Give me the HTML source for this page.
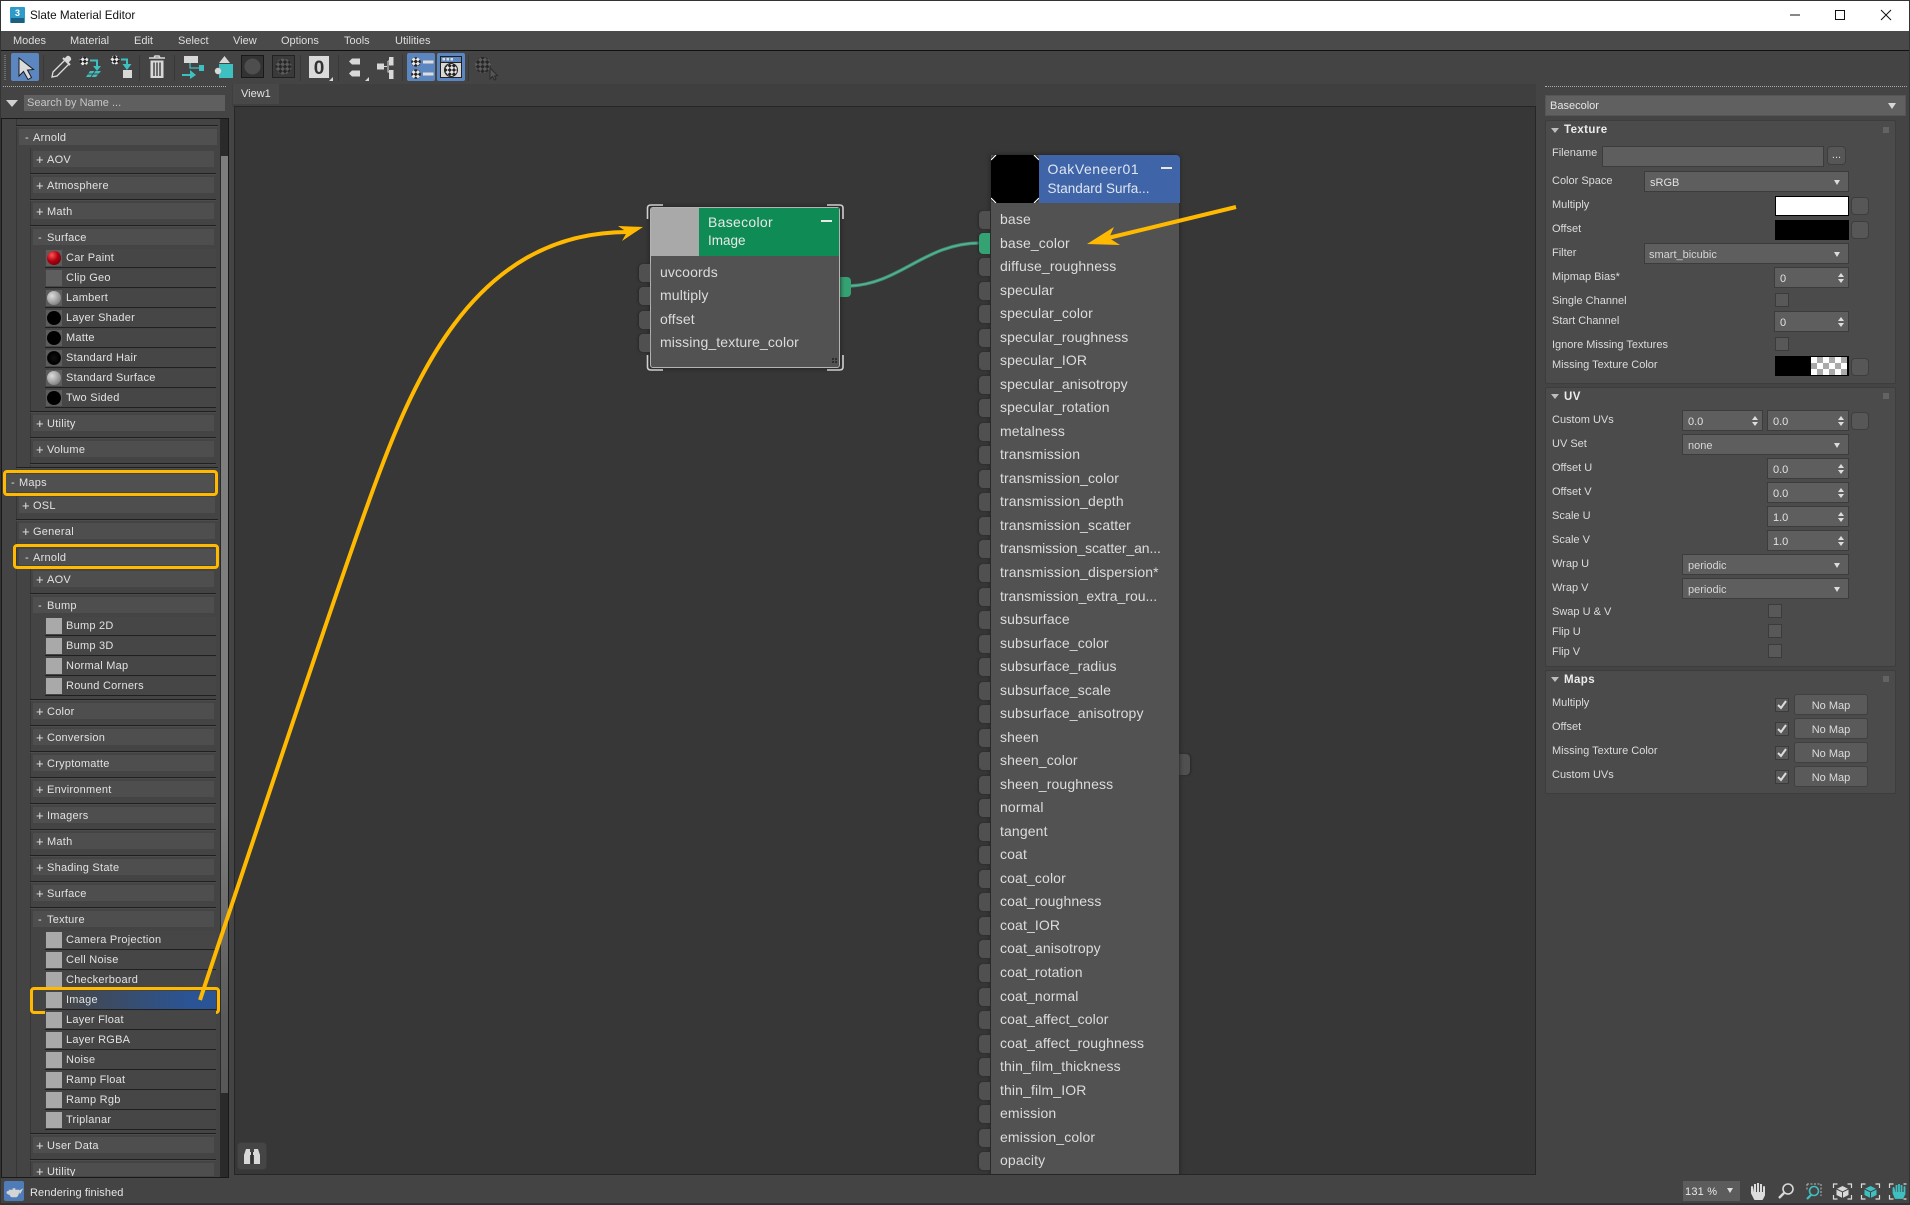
<!DOCTYPE html>
<html><head><meta charset="utf-8"><title>Slate Material Editor</title>
<style>
html,body{margin:0;padding:0;background:#444;}
body{width:1910px;height:1205px;position:relative;overflow:hidden;font:11px "Liberation Sans",sans-serif;color:#dcdcdc;}
div,span{box-sizing:border-box;}
.a{position:absolute;}
.t{position:absolute;white-space:nowrap;height:16px;line-height:18px;}
.m{position:absolute;top:33px;height:16px;line-height:16px;color:#dedede;font-size:11px;}
/* left list */
.cat{position:absolute;left:33px;width:181px;height:16px;background:#4e4e4e;line-height:18px;padding-left:14px;letter-spacing:.25px;color:#e2e2e2;white-space:nowrap;}
.cat b{position:absolute;left:3px;top:0;font-weight:normal;font-size:13px;}
.cat2{left:19px;width:196px;}
.sep{position:absolute;left:30px;width:186px;height:1px;background:#202020;box-shadow:0 1px 0 #4c4c4c;}
.sep2{left:16px;width:202px;}
.it{position:absolute;left:45px;width:171px;height:19px;line-height:19px;background:#464646;border-bottom:1px solid #202020;padding-left:21px;letter-spacing:.25px;color:#e2e2e2;white-space:nowrap;}
.it i{position:absolute;left:1px;top:1px;width:16px;height:16px;background:#a9a9a9;}
.it i.s{background:#5c5c5c;}
.it i.s:after{content:"";position:absolute;left:1px;top:1px;width:14px;height:14px;border-radius:50%;background:#000;}
.it i.g:after{background:radial-gradient(circle at 35% 35%,#ddd,#888 70%,#555);}
.it i.r:after{background:radial-gradient(circle at 35% 30%,#f55,#b00010 45%,#500);}
.it i.h:after{background:radial-gradient(circle at 50% 50%,#111,#000 60%,#333);}
.box{position:absolute;border:3px solid #ffb900;border-radius:4px;}
/* nodes */
.node{position:absolute;background:#525252;box-shadow:0 0 5px #1e1e1e;}
.rows{position:absolute;font-size:14px;letter-spacing:.13px;color:#dcdcdc;white-space:nowrap;}
.rows div{position:relative;height:23.54px;line-height:23.54px;}
.rows div:before{content:"";position:absolute;left:-21px;top:3px;width:11px;height:18px;background:#505050;border-radius:4px 0 0 4px;box-shadow:-1px 0 2px #272727;}
.rows div.on:before{background:#35a273;top:1px;height:21px;}
/* properties */
.ro{position:absolute;left:1545px;width:351px;background:#4b4b4b;border:1px solid #3d3d3d;border-radius:2px;}
.rt{position:absolute;left:1564px;font-weight:bold;font-size:11.5px;letter-spacing:.4px;color:#ececec;white-space:nowrap;height:16px;line-height:16px;}
.tri{position:absolute;width:0;height:0;border-left:4px solid transparent;border-right:4px solid transparent;border-top:5px solid #bdbdbd;}
.gr{position:absolute;left:1883px;width:6px;height:6px;background:radial-gradient(#aaa 40%,transparent 45%) 0 0/2px 2px;}
.in{position:absolute;background:#5e5e5e;border:1px solid #3c3c3c;height:21px;line-height:22px;padding-left:5px;color:#e2e2e2;white-space:nowrap;}
.dd:after{content:"";position:absolute;right:8px;top:8px;border-left:3.5px solid transparent;border-right:3.5px solid transparent;border-top:5px solid #ddd;}
.sp:before{content:"";position:absolute;right:4px;top:5px;border-left:3px solid transparent;border-right:3px solid transparent;border-bottom:4px solid #ddd;}
.sp:after{content:"";position:absolute;right:4px;top:11px;border-left:3px solid transparent;border-right:3px solid transparent;border-top:4px solid #ddd;}
.sb{position:absolute;left:1851px;width:18px;height:18px;background:#575757;border:1px solid #3e3e3e;border-radius:4px;}
.ck{position:absolute;width:14px;height:14px;background:#585858;border:1px solid #3b3b3b;}
.nm{position:absolute;left:1794px;width:74px;height:21px;line-height:22px;background:#5a5a5a;border:1px solid #404040;border-radius:3px;text-align:center;color:#dcdcdc;}
</style></head>
<body>
<!-- frame / title -->
<div class="a" style="left:0;top:0;width:1910px;height:1px;background:#333"></div>
<div class="a" style="left:1px;top:1px;width:1908px;height:30px;background:#fff"></div>
<div class="a" style="left:0;top:0;width:1px;height:1205px;background:#333"></div>
<div class="a" style="left:1909px;top:0;width:1px;height:1205px;background:#333"></div>
<svg class="a" style="left:9px;top:6px" width="17" height="18" viewBox="0 0 17 18"><rect x="1" y="1" width="15" height="16" rx="1" fill="#2f9bc9"/><rect x="2" y="12" width="13" height="5" fill="#1c5f80"/><text x="8.5" y="10" font-family="Liberation Sans" font-size="9" font-weight="bold" fill="#fff" text-anchor="middle">3</text></svg>
<div class="t" style="left:30px;top:7px;font-size:11.7px;color:#111;">Slate Material Editor</div>
<svg class="a" style="left:1785px;top:5px" width="110" height="20"><path d="M5 10H15" stroke="#111" fill="none"/><rect x="50.5" y="5.5" width="9" height="9" stroke="#111" fill="none"/><path d="M96 5L106 15M106 5L96 15" stroke="#111" fill="none"/></svg>

<!-- menu -->
<div class="a" style="left:1px;top:31px;width:1908px;height:19px;background:#4a4a4a"></div>
<div class="a" style="left:1px;top:50px;width:1908px;height:1px;background:#111"></div>
<div class="m" style="left:13px">Modes</div><div class="m" style="left:70px">Material</div><div class="m" style="left:134px">Edit</div><div class="m" style="left:178px">Select</div><div class="m" style="left:233px">View</div><div class="m" style="left:281px">Options</div><div class="m" style="left:344px">Tools</div><div class="m" style="left:395px">Utilities</div>

<!-- toolbar -->
<svg class="a" style="left:0;top:50px" width="520" height="36" viewBox="0 50 520 36">
<defs>
<pattern id="ckw" width="6" height="6" patternUnits="userSpaceOnUse" patternTransform="rotate(45)"><rect width="6" height="6" fill="#e8e8e8"/><rect width="3" height="3" fill="#222"/><rect x="3" y="3" width="3" height="3" fill="#222"/></pattern>
<pattern id="ckd" width="6.5" height="6.5" patternUnits="userSpaceOnUse" patternTransform="rotate(45)"><rect width="6.5" height="6.5" fill="#5c5c5c"/><rect width="3.25" height="3.25" fill="#262626"/><rect x="3.25" y="3.25" width="3.25" height="3.25" fill="#262626"/></pattern>
</defs>
<path d="M5 55V81" stroke="#999" stroke-width="1" stroke-dasharray="1 1"/>
<g stroke="#383838"><path d="M43.5 55V81M139.5 55V81M174.5 55V81M300.5 55V81M338.5 55V81M402.5 55V81M468.5 55V81"/></g>
<rect x="11" y="53" width="28" height="28" rx="2" fill="#5b86c0"/>
<path d="M19 58V76L23.5 71.5 28 79.5 31.5 77.5 27.5 70 33.5 69.5Z" fill="#dcdcdc" stroke="#1d1d1d"/>
<path d="M52 77L53 72 65 60 69 64 57 76Z" fill="#444" stroke="#ddd" stroke-width="1.3"/><path d="M64 59L67 56C69 55 72 58 71 60L68 63Z" fill="#d8d8d8"/><path d="M63 58L70 65" stroke="#d8d8d8" stroke-width="2"/>
<circle cx="84" cy="61" r="4.5" fill="url(#ckw)"/>
<path d="M90 60.5H97V68" fill="none" stroke="#3fc0c0" stroke-width="2"/><path d="M93 66H101L97 71Z" fill="#3fc0c0"/><path d="M90 71H101L96 77H86Z" fill="#3fc0c0"/><path d="M95 71L91 77M87.5 74H99" stroke="#444"/>
<circle cx="115" cy="60" r="4.5" fill="url(#ckw)"/>
<path d="M121 59.5H127V66" fill="none" stroke="#3fc0c0" stroke-width="2"/><path d="M122.5 64H131.5L127 70Z" fill="#3fc0c0"/><rect x="123" y="70" width="9" height="8" fill="#d8d8d8"/>
<path d="M149 58H165M154 58L155 56H159L160 58" stroke="#d8d8d8" stroke-width="1.6" fill="none"/><path d="M150.5 60.5H163.5V78H150.5Z" fill="#d8d8d8"/><path d="M154 62.5V76M157 62.5V76M160 62.5V76" stroke="#444" stroke-width="1.5"/>
<rect x="184" y="56" width="14" height="7" fill="#d8d8d8"/><path d="M190 63V68H199" stroke="#3fc0c0" fill="none" stroke-width="1.3"/><rect x="199" y="65" width="5" height="6" fill="#3fc0c0"/><path d="M182 75H192" stroke="#3fc0c0" stroke-width="2"/><path d="M190 70L196 75 190 79Z" fill="#3fc0c0"/>
<path d="M219 63L224.5 56 230 63Z" fill="#d8d8d8"/><rect x="219" y="64" width="14" height="14" fill="#3fc0c0"/><circle cx="218" cy="71" r="3.2" fill="#d8d8d8"/>
<rect x="241.5" y="55.5" width="22" height="22" fill="#333" stroke="#191919"/><circle cx="252.5" cy="66.5" r="8" fill="#4e4e4e"/>
<rect x="272.5" y="55.5" width="22" height="22" fill="#3a3a3a" stroke="#222"/><circle cx="283.5" cy="66.5" r="8" fill="url(#ckd)"/>
<rect x="309" y="56" width="20" height="22" fill="#dadada"/><text x="319" y="74" font-family="Liberation Sans" font-size="19" font-weight="bold" fill="#333" text-anchor="middle">0</text>
<path d="M329 81L333 77V81Z" fill="#d8d8d8"/>
<path d="M352 58.5H360V64.5H352L349 61.5Z" fill="#d8d8d8"/><path d="M352 70.5H360V76.5H352L349 73.5Z" fill="#d8d8d8"/><path d="M365 81H369V77Z" fill="#d8d8d8"/>
<rect x="377" y="63.5" width="7" height="6" fill="#d8d8d8"/><path d="M384 66.5H387M388 61V72H389M388 61H389" stroke="#d8d8d8" fill="none"/><rect x="389" y="57" width="4.5" height="8.5" fill="#d8d8d8"/><rect x="389" y="70" width="4.5" height="9" fill="#d8d8d8"/>
<rect x="407" y="53" width="28" height="28" rx="2" fill="#5b86c0"/><circle cx="416" cy="62" r="4.8" fill="url(#ckw)"/><circle cx="416" cy="74" r="4.8" fill="url(#ckw)"/><rect x="423" y="60.5" width="10.5" height="3" fill="#ddd"/><rect x="423" y="72.5" width="10.5" height="3" fill="#ddd"/>
<rect x="437" y="53" width="28" height="28" rx="2" fill="#5b86c0"/><rect x="440.5" y="56.5" width="21" height="21" fill="#d8d8d8" stroke="#222"/><rect x="440.5" y="56.5" width="21" height="6" fill="#5b86c0" stroke="#222"/><rect x="442.5" y="58" width="2.5" height="2.5" fill="#ddd"/><rect x="446.5" y="58" width="2.5" height="2.5" fill="#ddd"/><rect x="450.5" y="58" width="2.5" height="2.5" fill="#ddd"/><circle cx="451" cy="70" r="6.5" fill="url(#ckw)" stroke="#222"/>
<circle cx="483" cy="65" r="8" fill="url(#ckd)"/><path d="M490 68V79L492.5 76.5 494.5 80 496 79 494.5 76 497.5 75.5Z" fill="#555" stroke="#2a2a2a"/>
</svg>
<div class="a" style="left:3px;top:86px;width:223px;height:1px;border-top:1px dotted #aaa"></div>
<div class="a" style="left:1545px;top:86px;width:362px;height:1px;border-top:1px dotted #aaa"></div>

<!-- search -->
<div class="a" style="left:6px;top:100px;border-left:6px solid transparent;border-right:6px solid transparent;border-top:7px solid #d0d0d0"></div>
<div class="a" style="left:24px;top:95px;width:201px;height:16px;background:#5f5f5f;padding-left:3px;line-height:17px;color:#c6c6c6;">Search by Name ...</div>

<!-- left panel -->
<div class="a" style="left:1px;top:118px;width:228px;height:1060px;background:#444;border:1px solid #191919;overflow:hidden"></div>
<div class="a" style="left:16px;top:119px;width:1px;height:1058px;background:#363636"></div>
<div class="a" style="left:30px;top:148px;width:1px;height:319px;background:#363636"></div>
<div class="a" style="left:30px;top:568px;width:1px;height:608px;background:#363636"></div>
<div class="a" style="left:220px;top:119px;width:8px;height:1058px;background:#2a2a2a"></div>
<div class="a" style="left:221px;top:156px;width:7px;height:937px;background:linear-gradient(#7e7e7e,#7e7e7e 70%,#5a5a5a 92%,#585858)"></div>
<div class="sep sep2" style="top:125px"></div>

<div class="a" style="left:19px;top:129px;width:198px;height:16px;background:#505050;line-height:18px;padding-left:14px;letter-spacing:.25px;color:#e2e2e2"><b style="position:absolute;left:6px;top:0;font-weight:normal">-</b>Arnold</div>
<div class="cat" style="top:151px"><b>+</b>AOV</div><div class="sep" style="top:173px"></div>
<div class="cat" style="top:177px"><b>+</b>Atmosphere</div><div class="sep" style="top:199px"></div>
<div class="cat" style="top:203px"><b>+</b>Math</div><div class="sep" style="top:225px"></div>
<div class="cat" style="top:229px"><b style="left:5px;font-size:11px">-</b>Surface</div>
<div class="it" style="top:249px"><i class="s r"></i>Car Paint</div>
<div class="it" style="top:269px"><i style="background:#5e5e5e"></i>Clip Geo</div>
<div class="it" style="top:289px"><i class="s g"></i>Lambert</div>
<div class="it" style="top:309px"><i class="s"></i>Layer Shader</div>
<div class="it" style="top:329px"><i class="s"></i>Matte</div>
<div class="it" style="top:349px"><i class="s h"></i>Standard Hair</div>
<div class="it" style="top:369px"><i class="s g"></i>Standard Surface</div>
<div class="it" style="top:389px"><i class="s"></i>Two Sided</div>
<div class="sep" style="top:411px"></div>
<div class="cat" style="top:415px"><b>+</b>Utility</div><div class="sep" style="top:437px"></div>
<div class="cat" style="top:441px"><b>+</b>Volume</div><div class="sep" style="top:463px"></div>
<div class="sep sep2" style="top:467px"></div>

<div class="a" style="left:6px;top:474px;width:208px;height:18px;background:#505050;line-height:19px;padding-left:13px;letter-spacing:.25px;color:#e2e2e2"><b style="position:absolute;left:5px;top:0;font-weight:normal">-</b>Maps</div>
<div class="box" style="left:3px;top:470px;width:215px;height:26px"></div>
<div class="cat cat2" style="top:497px"><b>+</b>OSL</div><div class="sep sep2" style="top:519px"></div>
<div class="cat cat2" style="top:523px"><b>+</b>General</div>
<div class="a" style="left:19px;top:549px;width:197px;height:16px;background:#505050;line-height:18px;padding-left:14px;letter-spacing:.25px;color:#e2e2e2"><b style="position:absolute;left:6px;top:0;font-weight:normal">-</b>Arnold</div>
<div class="box" style="left:13px;top:544px;width:206px;height:25px"></div>
<div class="cat" style="top:571px"><b>+</b>AOV</div><div class="sep" style="top:593px"></div>
<div class="cat" style="top:597px"><b style="left:5px;font-size:11px">-</b>Bump</div>
<div class="it" style="top:617px"><i></i>Bump 2D</div>
<div class="it" style="top:637px"><i></i>Bump 3D</div>
<div class="it" style="top:657px"><i></i>Normal Map</div>
<div class="it" style="top:677px"><i></i>Round Corners</div>
<div class="sep" style="top:699px"></div>
<div class="cat" style="top:703px"><b>+</b>Color</div><div class="sep" style="top:725px"></div>
<div class="cat" style="top:729px"><b>+</b>Conversion</div><div class="sep" style="top:751px"></div>
<div class="cat" style="top:755px"><b>+</b>Cryptomatte</div><div class="sep" style="top:777px"></div>
<div class="cat" style="top:781px"><b>+</b>Environment</div><div class="sep" style="top:803px"></div>
<div class="cat" style="top:807px"><b>+</b>Imagers</div><div class="sep" style="top:829px"></div>
<div class="cat" style="top:833px"><b>+</b>Math</div><div class="sep" style="top:855px"></div>
<div class="cat" style="top:859px"><b>+</b>Shading State</div><div class="sep" style="top:881px"></div>
<div class="cat" style="top:885px"><b>+</b>Surface</div><div class="sep" style="top:907px"></div>
<div class="cat" style="top:911px"><b style="left:5px;font-size:11px">-</b>Texture</div>
<div class="it" style="top:931px"><i></i>Camera Projection</div>
<div class="it" style="top:951px"><i></i>Cell Noise</div>
<div class="it" style="top:971px"><i></i>Checkerboard</div>
<div class="it" style="top:991px;background:linear-gradient(90deg,#464646 10%,#2a5495 85%)"><i></i>Image</div>
<div class="box" style="left:30px;top:987px;width:190px;height:27px"></div>
<div class="it" style="top:1011px"><i></i>Layer Float</div>
<div class="it" style="top:1031px"><i></i>Layer RGBA</div>
<div class="it" style="top:1051px"><i></i>Noise</div>
<div class="it" style="top:1071px"><i></i>Ramp Float</div>
<div class="it" style="top:1091px"><i></i>Ramp Rgb</div>
<div class="it" style="top:1111px"><i></i>Triplanar</div>
<div class="sep" style="top:1133px"></div>
<div class="cat" style="top:1137px"><b>+</b>User Data</div><div class="sep" style="top:1159px"></div>
<div class="cat" style="top:1163px;height:13px;overflow:hidden"><b>+</b>Utility</div>

<!-- tabs & canvas -->
<div class="a" style="left:232px;top:84px;width:1304px;height:23px;background:#3f3f3f"></div>
<div class="a" style="left:233px;top:84px;width:46px;height:20px;background:#484848;padding-left:8px;line-height:21px;color:#e2e2e2">View1</div>
<div class="a" style="left:234px;top:106px;width:1302px;height:1069px;background:#373737;border:1px solid #262626;overflow:hidden">
 <div class="a" style="left:-235px;top:-107px;width:1910px;height:1205px">
  <!-- wire -->
  <svg class="a" style="left:0;top:0" width="1910" height="1205"><path d="M850 286C900 284 925 243 980 243" fill="none" stroke="#3d8e74" stroke-width="3.4"/><path d="M850 286C900 284 925 243 980 243" fill="none" stroke="#58b395" stroke-width="1.4"/></svg>
  <!-- basecolor -->
  <div class="a" style="left:839px;top:277px;width:12px;height:20px;background:#35a273;border-radius:0 4px 4px 0"></div>
  <div class="node" style="left:650px;top:207px;width:190px;height:161px;border:1px solid #b4b4b4;border-radius:3px">
   <div class="a" style="left:0;top:0;width:188px;height:48px;background:#0f8c55"></div>
   <div class="a" style="left:0;top:0;width:48px;height:48px;background:#a9a9a9"></div>
   <div class="t" style="left:57px;top:5px;font-size:14px;height:18px;line-height:18px;color:#e8e8e8;letter-spacing:.3px">Basecolor</div>
   <div class="t" style="left:57px;top:24px;font-size:13.5px;height:18px;line-height:18px;color:#e8e8e8">Image</div>
   <div class="a" style="left:170px;top:12px;width:11px;height:2px;background:#e8e8e8"></div>
  </div>
  <div class="rows" style="left:660px;top:260.5px;"><div>uvcoords</div><div>multiply</div><div>offset</div><div>missing_texture_color</div></div>
  <svg class="a" style="left:0;top:0" width="1910" height="1205"><path d="M647.5 219V208Q647.5 205 651 205H663M843 219V208Q843 205 839.5 205H827M647.5 355V367Q647.5 370 651 370H663M843 355V367Q843 370 839.5 370H827" fill="none" stroke="#cfcfcf" stroke-width="1.6"/><g fill="#2e2e2e"><rect x="832" y="358" width="2" height="2"/><rect x="835" y="358" width="2" height="2"/><rect x="835" y="361" width="2" height="2"/><rect x="832" y="361" width="2" height="2"/></g></svg>
  <!-- oakveneer -->
  <div class="a" style="left:1179px;top:754px;width:11px;height:21px;background:#505050;border-radius:0 4px 4px 0;box-shadow:1px 0 2px #272727"></div>
  <div class="node" style="left:990.5px;top:155px;width:188.5px;height:1040px;border-radius:0 4px 0 0">
   <div class="a" style="left:0;top:0;width:189px;height:48px;background:#3f65a8;border-radius:0 4px 0 0"></div>
   <div class="a" style="left:0;top:0;width:48px;height:48px;background:#555"></div>
   <div class="a" style="left:0;top:0;width:48px;height:48px;background:#000;border-radius:5px"></div>
   <svg class="a" style="left:0;top:0" width="48" height="48"><path d="M0 5L5 0M43 0L48 5M48 43L43 48M5 48L0 43" stroke="#fff" stroke-width="1.2"/></svg>
   <div class="t" style="left:57px;top:5px;font-size:14px;height:18px;line-height:18px;color:#dfe6f2;letter-spacing:.55px">OakVeneer01</div>
   <div class="t" style="left:57px;top:25px;font-size:13.5px;height:18px;line-height:18px;color:#dfe6f2;letter-spacing:0">Standard Surfa...</div>
   <div class="a" style="left:170px;top:12px;width:11px;height:2px;background:#e8e8e8"></div>
  </div>
  <div class="rows" style="left:1000px;top:208px">
<div>base</div><div class="on">base_color</div><div>diffuse_roughness</div><div>specular</div><div>specular_color</div><div>specular_roughness</div><div>specular_IOR</div><div>specular_anisotropy</div><div>specular_rotation</div><div>metalness</div><div>transmission</div><div>transmission_color</div><div>transmission_depth</div><div>transmission_scatter</div><div style="letter-spacing:-.1px">transmission_scatter_an...</div><div>transmission_dispersion*</div><div style="letter-spacing:0">transmission_extra_rou...</div><div>subsurface</div><div>subsurface_color</div><div>subsurface_radius</div><div>subsurface_scale</div><div>subsurface_anisotropy</div><div>sheen</div><div>sheen_color</div><div>sheen_roughness</div><div>normal</div><div>tangent</div><div>coat</div><div>coat_color</div><div>coat_roughness</div><div>coat_IOR</div><div>coat_anisotropy</div><div>coat_rotation</div><div>coat_normal</div><div>coat_affect_color</div><div>coat_affect_roughness</div><div>thin_film_thickness</div><div>thin_film_IOR</div><div>emission</div><div>emission_color</div><div>opacity</div>
  </div>
  <!-- binoculars -->
  <div class="a" style="left:237px;top:1142px;width:30px;height:28px;background:#454545;border:1px solid #3d3d3d;border-radius:4px"></div>
  <svg class="a" style="left:237px;top:1142px" width="30" height="28"><path d="M7 22V13L9 7H13V10H17V7H21L23 13V22H17V13H13V22Z" fill="#d8d8d8"/><path d="M15 10V22" stroke="#333" stroke-width="2"/></svg>
 </div>
</div>

<!-- right panel -->
<div class="a" style="left:1545px;top:95px;width:361px;height:21px;background:#606060;border:1px solid #555;padding-left:4px;line-height:21px;color:#e6e6e6">Basecolor<span class="a" style="right:9px;top:7px;border-left:4.5px solid transparent;border-right:4.5px solid transparent;border-top:6px solid #d8d8d8"></span></div>

<div class="ro" style="top:120px;height:264px"></div>
<div class="tri" style="left:1551px;top:128px"></div><div class="rt" style="top:122px">Texture</div><div class="gr" style="top:127px"></div>
<div class="t" style="left:1552px;top:144px">Filename</div>
<div class="in" style="left:1602px;top:146px;width:222px"></div>
<div class="a" style="left:1827px;top:146px;width:19px;height:19px;background:#565656;border:1px solid #3e3e3e;border-radius:4px;text-align:center;line-height:17px">...</div>
<div class="t" style="left:1552px;top:172px">Color Space</div>
<div class="in dd" style="left:1644px;top:171px;width:205px">sRGB</div>
<div class="t" style="left:1552px;top:196px">Multiply</div>
<div class="a" style="left:1775px;top:196px;width:74px;height:20px;background:#fff;border:1px solid #000"></div><div class="sb" style="top:197px"></div>
<div class="t" style="left:1552px;top:220px">Offset</div>
<div class="a" style="left:1775px;top:220px;width:74px;height:20px;background:#000"></div><div class="sb" style="top:221px"></div>
<div class="t" style="left:1552px;top:244px">Filter</div>
<div class="in dd" style="left:1644px;top:243px;width:205px;padding-left:4px;color:#d6d6d6">smart_bicubic</div>
<div class="t" style="left:1552px;top:268px">Mipmap Bias*</div>
<div class="in sp" style="left:1774px;top:267px;width:75px">0</div>
<div class="t" style="left:1552px;top:292px">Single Channel</div><div class="ck" style="left:1775px;top:293px"></div>
<div class="t" style="left:1552px;top:312px">Start Channel</div>
<div class="in sp" style="left:1774px;top:311px;width:75px">0</div>
<div class="t" style="left:1552px;top:336px">Ignore Missing Textures</div><div class="ck" style="left:1775px;top:337px"></div>
<div class="t" style="left:1552px;top:356px">Missing Texture Color</div>
<div class="a" style="left:1775px;top:356px;width:74px;height:20px;background:#000;border:1px solid #000"></div>
<div class="a" style="left:1811px;top:357px;width:36px;height:18px;background:conic-gradient(#aaa 25%,#fff 0 50%,#aaa 0 75%,#fff 0) 0 0/12px 12px"></div><div class="sb" style="top:358px"></div>

<div class="ro" style="top:387px;height:280px"></div>
<div class="tri" style="left:1551px;top:394px"></div><div class="rt" style="top:389px">UV</div><div class="gr" style="top:393px"></div>
<div class="t" style="left:1552px;top:411px">Custom UVs</div>
<div class="in sp" style="left:1682px;top:410px;width:81px">0.0</div><div class="in sp" style="left:1767px;top:410px;width:82px">0.0</div><div class="sb" style="top:412px"></div>
<div class="t" style="left:1552px;top:435px">UV Set</div><div class="in dd" style="left:1682px;top:434px;width:167px;color:#d6d6d6">none</div>
<div class="t" style="left:1552px;top:459px">Offset U</div><div class="in sp" style="left:1767px;top:458px;width:82px">0.0</div>
<div class="t" style="left:1552px;top:483px">Offset V</div><div class="in sp" style="left:1767px;top:482px;width:82px">0.0</div>
<div class="t" style="left:1552px;top:507px">Scale U</div><div class="in sp" style="left:1767px;top:506px;width:82px">1.0</div>
<div class="t" style="left:1552px;top:531px">Scale V</div><div class="in sp" style="left:1767px;top:530px;width:82px">1.0</div>
<div class="t" style="left:1552px;top:555px">Wrap U</div><div class="in dd" style="left:1682px;top:554px;width:167px;color:#d6d6d6">periodic</div>
<div class="t" style="left:1552px;top:579px">Wrap V</div><div class="in dd" style="left:1682px;top:578px;width:167px;color:#d6d6d6">periodic</div>
<div class="t" style="left:1552px;top:603px">Swap U &amp; V</div><div class="ck" style="left:1768px;top:604px"></div>
<div class="t" style="left:1552px;top:623px">Flip U</div><div class="ck" style="left:1768px;top:624px"></div>
<div class="t" style="left:1552px;top:643px">Flip V</div><div class="ck" style="left:1768px;top:644px"></div>

<div class="ro" style="top:670px;height:124px"></div>
<div class="tri" style="left:1551px;top:677px"></div><div class="rt" style="top:672px">Maps</div><div class="gr" style="top:676px"></div>
<div class="t" style="left:1552px;top:694px">Multiply</div>
<div class="t" style="left:1552px;top:718px">Offset</div>
<div class="t" style="left:1552px;top:742px">Missing Texture Color</div>
<div class="t" style="left:1552px;top:766px">Custom UVs</div>
<div class="ck" style="left:1775px;top:698px"></div><div class="ck" style="left:1775px;top:722px"></div><div class="ck" style="left:1775px;top:746px"></div><div class="ck" style="left:1775px;top:770px"></div>
<svg class="a" style="left:1775px;top:698px" width="14" height="90"><g fill="none" stroke="#dcdcdc" stroke-width="2"><path d="M3 7L6 10 11 3"/><path d="M3 31L6 34 11 27"/><path d="M3 55L6 58 11 51"/><path d="M3 79L6 82 11 75"/></g></svg>
<div class="nm" style="top:694px">No Map</div><div class="nm" style="top:718px">No Map</div><div class="nm" style="top:742px">No Map</div><div class="nm" style="top:766px">No Map</div>

<!-- status -->
<div class="a" style="left:1px;top:1203px;width:1908px;height:2px;background:#333"></div>
<div class="a" style="left:4px;top:1181px;width:20px;height:20px;background:#4f7cb8;border-radius:2px"></div>
<svg class="a" style="left:4px;top:1181px" width="20" height="20"><path d="M5 9H15C15 13 13.5 16 12 16H8C6.5 16 5 13 5 9ZM9 7.5H11V9H9ZM15 10L18.5 8 16 12.5ZM5 10.5C2 9.5 2 13 5.5 13.5" fill="#d4d4d4" stroke="#d4d4d4" stroke-width=".6"/></svg>
<div class="t" style="left:30px;top:1184px;color:#e6e6e6;letter-spacing:.1px">Rendering finished</div>
<div class="a" style="left:1683px;top:1181px;width:57px;height:20px;background:#5c5c5c;line-height:22px;padding-left:2px;color:#e8e8e8;letter-spacing:.2px">131 %<span class="a" style="right:7px;top:7px;border-left:3.5px solid transparent;border-right:3.5px solid transparent;border-top:5px solid #ddd"></span></div>
<svg class="a" style="left:1745px;top:1178px" width="165" height="26" viewBox="1745 1178 165 26">
<path d="M1753 1192L1752 1187V1193L1755 1199H1762L1764 1195V1187V1192M1755 1192V1184M1758 1192V1183M1761 1192V1184M1764 1192" fill="#dcdcdc" stroke="#dcdcdc" stroke-width="2" stroke-linejoin="round"/>
<circle cx="1788" cy="1189" r="5" fill="none" stroke="#d8d8d8" stroke-width="1.6"/><path d="M1784 1193L1779 1198" stroke="#d8d8d8" stroke-width="2.4"/>
<path d="M1807 1184H1821V1196M1807 1184V1190" fill="none" stroke="#bbb" stroke-dasharray="2 1.5"/><circle cx="1814" cy="1191" r="4.5" fill="none" stroke="#3fc0c0" stroke-width="1.6"/><path d="M1811 1195L1807 1199" stroke="#3fc0c0" stroke-width="2.2"/>
<g transform="translate(-1.5 0)">
<path d="M1835 1188V1184H1839M1849 1184H1853V1188M1853 1195V1199H1849M1839 1199H1835V1195" fill="none" stroke="#ddd" stroke-width="1.2"/><path d="M1844 1186L1850 1189V1195L1844 1198 1838 1195V1189Z" fill="#d8d8d8"/><path d="M1838 1189L1844 1192 1850 1189M1844 1192V1198" stroke="#444" fill="none"/>
<path d="M1863 1188V1184H1867M1877 1184H1881V1188M1881 1195V1199H1877M1867 1199H1863V1195" fill="none" stroke="#ddd" stroke-width="1.2"/><path d="M1872 1186L1878 1189V1195L1872 1198 1866 1195V1189Z" fill="#3fc0c0"/><path d="M1866 1189L1872 1192 1878 1189M1872 1192V1198" stroke="#444" fill="none"/>
<path d="M1891 1188V1184H1895M1905 1184H1908M1908 1199H1905M1895 1199H1891V1195" fill="none" stroke="#ddd" stroke-width="1.2"/><path d="M1896 1192L1895 1188V1193L1897 1198H1904L1906 1194V1187V1192M1898 1192V1185M1900.5 1192V1184M1903 1192V1185" fill="#3fc0c0" stroke="#3fc0c0" stroke-width="1.8" stroke-linejoin="round"/>
</g>
</svg>

<!-- annotation arrows -->
<svg class="a" style="left:0;top:0;pointer-events:none" width="1910" height="1205">
<path d="M200 1000C270 790 330 610 365 512C410 385 470 232 628 232" fill="none" stroke="#ffb900" stroke-width="4"/>
<path d="M643 227L618 226 627 232 622 241Z" fill="#ffb900"/>
<path d="M1236 207L1108 238" fill="none" stroke="#ffb900" stroke-width="4"/>
<path d="M1087 244L1114 227 1109 238 1120 245Z" fill="#ffb900"/>
</svg>
</body></html>
